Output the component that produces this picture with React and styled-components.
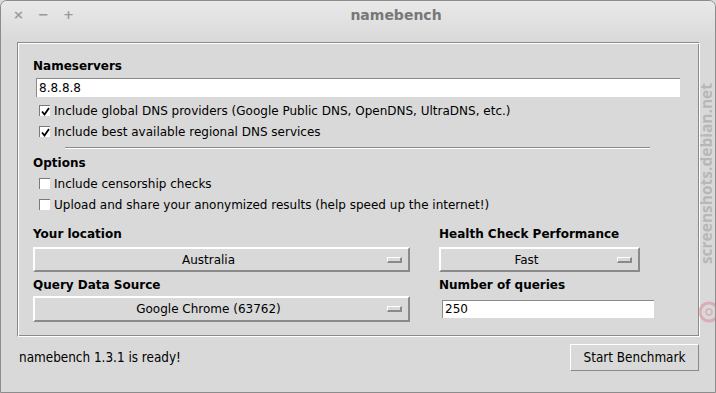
import React from "react";
import styled, { createGlobalStyle } from "styled-components";

const GlobalStyle = createGlobalStyle`
  html, body { margin: 0; padding: 0; background: #d9d9d9; }
  body { font-family: "DejaVu Sans", "Liberation Sans", sans-serif; }
`;

const Window = styled.div`
  position: relative;
  width: 716px;
  height: 393px;
  box-sizing: border-box;
  border: 1px solid #8c8c8c;
  border-radius: 7px 7px 0 0;
  background: #d9d9d9;
  display: flex;
  flex-direction: column;
  overflow: hidden;
`;

const TitleBar = styled.div`
  height: 41px;
  flex: none;
  display: flex;
  align-items: flex-start;
  background: linear-gradient(#e9e9e9, #d9d9d9);
`;

const Controls = styled.div`
  width: 80px;
  display: flex;
  gap: 15px;
  padding: 7px 0 0 12px;
  box-sizing: border-box;
`;

const Control = styled.span`
  width: 10px;
  text-align: center;
  font-size: 13px;
  font-weight: bold;
  line-height: 14px;
  color: #9a9a9a;
`;

const Title = styled.div`
  flex: 1;
  text-align: center;
  padding: 5px 4px 0 0;
  font-size: 14px;
  font-weight: bold;
  color: #777;
  line-height: 18px;
`;

const Frame = styled.div`
  height: 295px;
  flex: none;
  margin: 0 15px 0 16px;
  box-sizing: border-box;
  border: 1px solid;
  border-color: #8a8a8a #fff #fff #8a8a8a;
  box-shadow: inset 1px 1px 0 #fff, inset -1px -1px 0 #8a8a8a;
  padding: 15px 0 0 15px;
  display: flex;
  flex-direction: column;
`;

const Label = styled.div`
  font-size: 12px;
  font-weight: bold;
  line-height: 16px;
  color: #000;
  margin-top: ${(p) => p.$top || 0}px;
`;

const TextInput = styled.div`
  margin: ${(p) => p.$top}px 0 0 3px;
  width: ${(p) => p.$width}px;
  height: ${(p) => p.$height}px;
  box-sizing: border-box;
  background: #fff;
  border-top: 1px solid #8a8a8a;
  border-left: 1px solid #8a8a8a;
  padding-left: 2px;
  font-size: 12px;
  line-height: ${(p) => p.$height - 1}px;
  color: #000;
`;

const CheckRow = styled.div`
  height: 21px;
  margin-top: ${(p) => p.$top || 0}px;
  display: flex;
  align-items: center;
  padding-left: 6px;
  gap: 4px;
  font-size: 12px;
  color: #000;
  white-space: nowrap;
`;

const Box = styled.span`
  width: 11px;
  height: 11px;
  box-sizing: border-box;
  background: #fff;
  border-top: 1px solid #7a7a7a;
  border-left: 1px solid #7a7a7a;
  display: flex;
  align-items: center;
  justify-content: center;
  flex: none;
`;

const Separator = styled.div`
  margin: 5px 0 0 32px;
  width: 585px;
  height: 1px;
  background: #8a8a8a;
  border-bottom: 1px solid #fff;
`;

const Columns = styled.div`
  margin-top: 11px;
  display: grid;
  grid-template-columns: 377px 215px;
  column-gap: 29px;
`;

const Column = styled.div`
  display: flex;
  flex-direction: column;
`;

const Combo = styled.div`
  margin-top: ${(p) => p.$top}px;
  width: ${(p) => p.$width}px;
  height: ${(p) => p.$height}px;
  box-sizing: border-box;
  border: 2px solid;
  border-color: #fff #8a8a8a #8a8a8a #fff;
  display: flex;
  align-items: center;
  font-size: 12px;
  color: #000;
`;

const ComboValue = styled.span`
  flex: 1;
  text-align: center;
`;

const Indicator = styled.span`
  width: 15px;
  height: 6px;
  box-sizing: border-box;
  margin: 0 6px 0 5px;
  border: 1px solid;
  border-width: 1px 2px 2px 1px;
  border-color: #fff #8a8a8a #8a8a8a #fff;
  background: #d9d9d9;
`;

const Footer = styled.div`
  flex: 1;
  display: flex;
  justify-content: space-between;
  align-items: flex-start;
  padding: 7px 16px 0 18px;
`;

const Status = styled.div`
  font-family: "DejaVu Sans Condensed", "DejaVu Sans", sans-serif;
  font-stretch: condensed;
  font-size: 13.4px;
  line-height: 27px;
  color: #000;
`;

const Button = styled.div`
  width: 129px;
  height: 27px;
  box-sizing: border-box;
  border: 1px solid;
  border-color: #fff #8a8a8a #8a8a8a #fff;
  display: flex;
  align-items: center;
  justify-content: center;
  font-family: "DejaVu Sans Condensed", "DejaVu Sans", sans-serif;
  font-stretch: condensed;
  font-size: 13.4px;
  color: #000;
`;

const WatermarkText = styled.div`
  position: absolute;
  left: 697px;
  top: 82px;
  writing-mode: vertical-rl;
  transform: rotate(180deg);
  font-family: "Open Sans", "DejaVu Sans", sans-serif;
  font-weight: bold;
  font-size: 15.5px;
  line-height: 16px;
  color: rgba(160, 160, 160, 0.6);
  white-space: nowrap;
`;

const WatermarkLogo = styled.svg`
  position: absolute;
  left: 697px;
  top: 300px;
`;

const Check = ({ checked }) => (
  <Box>
    {checked && (
      <svg width="9" height="9" viewBox="0 0 9 9">
        <path d="M1 4.5 L3.5 7.5 L8 1" fill="none" stroke="#000" strokeWidth="1.8" />
      </svg>
    )}
  </Box>
);

const App = () => {
  return (
    <>
      <GlobalStyle />
      <Window>
        <TitleBar>
          <Controls>
            <Control>×</Control>
            <Control>−</Control>
            <Control>+</Control>
          </Controls>
          <Title>namebench</Title>
        </TitleBar>
        <Frame>
          <Label>Nameservers</Label>
          <TextInput $top={4} $width={644} $height={19}>8.8.8.8</TextInput>
          <CheckRow $top={3}>
            <Check checked />
            Include global DNS providers (Google Public DNS, OpenDNS, UltraDNS, etc.)
          </CheckRow>
          <CheckRow>
            <Check checked />
            Include best available regional DNS services
          </CheckRow>
          <Separator />
          <Label $top={6}>Options</Label>
          <CheckRow $top={2}>
            <Check />
            Include censorship checks
          </CheckRow>
          <CheckRow>
            <Check />
            Upload and share your anonymized results (help speed up the internet!)
          </CheckRow>
          <Columns>
            <Column>
              <Label>Your location</Label>
              <Combo $top={5} $width={377} $height={25}>
                <ComboValue>Australia</ComboValue>
                <Indicator />
              </Combo>
              <Label $top={5}>Query Data Source</Label>
              <Combo $top={3} $width={377} $height={26}>
                <ComboValue>Google Chrome (63762)</ComboValue>
                <Indicator />
              </Combo>
            </Column>
            <Column>
              <Label>Health Check Performance</Label>
              <Combo $top={5} $width={201} $height={25}>
                <ComboValue>Fast</ComboValue>
                <Indicator />
              </Combo>
              <Label $top={5}>Number of queries</Label>
              <TextInput $top={7} $width={212} $height={18}>250</TextInput>
            </Column>
          </Columns>
        </Frame>
        <Footer>
          <Status>namebench 1.3.1 is ready!</Status>
          <Button>Start Benchmark</Button>
        </Footer>
        <WatermarkText>screenshots.debian.net</WatermarkText>
        <WatermarkLogo width="22" height="22" viewBox="0 0 22 22">
          <circle cx="11" cy="11" r="9" fill="none" stroke="rgba(220,120,140,0.45)" strokeWidth="3" />
          <circle cx="11" cy="11" r="3" fill="none" stroke="rgba(220,120,140,0.45)" strokeWidth="1.5" />
        </WatermarkLogo>
      </Window>
    </>
  );
};

export default App;
